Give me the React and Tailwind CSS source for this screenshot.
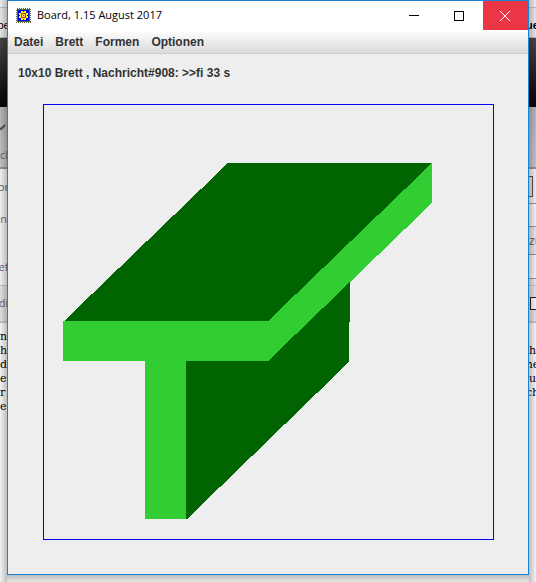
import React from "react";

const menus = ["Datei", "Brett", "Formen", "Optionen"];

const leftLines = ["n", "h", "d", "e", "r", "e"];
const rightLines = ["", "h", "ne", "u", "ch", ""];

function AppIcon() {
  return (
    <svg className="h-[15px] w-[15px] shrink-0" viewBox="0 0 15 15" shapeRendering="crispEdges" aria-hidden="true">
      <path d="M0.5 0.5H14.5V14.5H0.5Z" fill="none" stroke="#556b2f" strokeDasharray="1 1" />
      <path d="M1 1h13v13H1z" fill="#55682c" />
      <path d="M2 2h11v11H2z" fill="#0000f0" />
      <path d="M5 3h2v1h1V3h2v2h2v2h-1v1h1v2h-2v2H8v-1H7v1H5v-2H3V8h1V7H3V5h2z" fill="#ffff00" />
      <path d="M5 5h5v5H5z" fill="#f02020" />
      <path d="M6 6h3v3H6z" fill="#ffe060" />
      <path d="M7 7h1v1H7z" fill="#f02020" />
    </svg>
  );
}

function TitleBar() {
  return (
    <header className="flex h-[29px] items-stretch bg-white">
      <div className="flex flex-1 items-center gap-[6px] pl-2 text-black">
        <AppIcon />
        <h1 className="whitespace-nowrap font-['Open_Sans','Noto_Sans',sans-serif] text-[11px] font-normal">Board, 1.15 August 2017</h1>
      </div>
      <button aria-label="Minimieren" className="flex w-[45px] items-center justify-center pr-[3px]">
        <span className="h-px w-[10px] bg-black" />
      </button>
      <button aria-label="Maximieren" className="flex w-[45px] items-center justify-center pr-[3px]">
        <span className="h-[10px] w-[10px] border border-black" />
      </button>
      <button aria-label="Schließen" className="flex w-[45px] items-center justify-center bg-[#eb3645] pr-px">
        <svg className="h-[10px] w-[10px]" viewBox="0 0 10 10" aria-hidden="true">
          <path d="M0 0L10 10M10 0L0 10" stroke="#fff" strokeWidth="1" fill="none" />
        </svg>
      </button>
    </header>
  );
}

function Board() {
  return (
    <svg className="block w-full" viewBox="0 0 449 434" shapeRendering="crispEdges" role="img" aria-label="T-Träger">
      <path d="M140 256L306 177V217H305V257L143 414H140Z" fill="#006400" />
      <path d="M20 216L184 58H388L224 216Z" fill="#006400" />
      <path d="M19 216H224L388 58V98L224 256H142V414H101V256H19Z" fill="#32cd32" />
    </svg>
  );
}

function PageLines({ lines, className }) {
  return (
    <div className={`flex-1 bg-white pt-[7px] font-['DejaVu_Serif',serif] text-[11px] leading-[14px] text-black ${className}`}>
      {lines.map((line, i) => (
        <p key={i} className="h-[14px] whitespace-nowrap">{line}</p>
      ))}
    </div>
  );
}

function LeftPage() {
  return (
    <aside className="relative flex w-[7px] shrink-0 flex-col overflow-hidden font-['Open_Sans',sans-serif] text-[11px] text-[#666]">
      <div className="h-[8px] shrink-0 border-b border-[#ccc] bg-[#f8f8f8]" />
      <div className="flex h-[30px] shrink-0 items-center justify-center border-b border-[#bbb] bg-[#f0f0f0] pt-[6px] font-['Liberation_Sans',sans-serif] text-black">be</div>
      <div className="h-[69px] shrink-0 bg-linear-to-b from-[#4a4a4a] to-[#050505]" />
      <div className="flex h-[62px] shrink-0 flex-col border-b-2 border-[#999] bg-linear-to-b from-[#b9bcbf] to-[#c9cccf]">
        <svg className="mt-[15px] h-[10px] w-[7px] shrink-0" viewBox="0 0 7 10" aria-hidden="true">
          <path d="M0 6L1 7L5 3" fill="none" stroke="#555" strokeWidth="2" />
        </svg>
        <span className="mt-[15px] leading-4">cl</span>
      </div>
      <div className="flex h-[117px] shrink-0 flex-col items-center border-b border-[#ccc] bg-[#fcfcfc] text-[11px] leading-4">
        <span className="mt-[10px]">or</span>
        <span className="mt-[16px] text-[#855a75]">n</span>
        <span className="mt-[32px]">ef</span>
      </div>
      <div className="flex h-[37px] shrink-0 items-center justify-center border-b-2 border-[#ccc] bg-[#eaeaea] text-[11px]">di</div>
      <PageLines lines={leftLines} className="" />
      <div className="absolute inset-0 bg-linear-to-r from-black/5 to-black/25" />
    </aside>
  );
}

function RightPage() {
  return (
    <aside className="relative flex w-[7px] shrink-0 flex-col overflow-hidden font-['Open_Sans',sans-serif] text-[12px] text-[#666]">
      <div className="h-[8px] shrink-0 border-b border-[#ccc] bg-[#f8f8f8]" />
      <div className="flex h-[30px] shrink-0 items-center justify-center border-b border-[#bbb] bg-[#f0f0f0] pt-[6px] font-['Liberation_Sans',sans-serif] text-[11px] font-bold text-black">ue</div>
      <div className="h-[69px] shrink-0 bg-linear-to-b from-[#4a4a4a] to-[#050505]" />
      <div className="h-[62px] shrink-0 border-b-2 border-[#999] bg-linear-to-b from-[#b9bcbf] to-[#c9cccf]" />
      <div className="h-[35px] shrink-0 border-b border-[#999] bg-[#f8f8f8] pt-[7px]">
        <div className="h-[21px] w-[4px] border-y border-r border-[#555] bg-[#eee]" />
      </div>
      <div className="h-[23px] shrink-0 border-b border-[#999] bg-[#fcfcfc]" />
      <div className="flex h-[28px] shrink-0 items-center border-b border-[#999] bg-[#eee]">zu</div>
      <div className="h-[24px] shrink-0 border-b border-[#999] bg-[#fcfcfc]" />
      <div className="h-[7px] shrink-0 border-b border-[#ccc] bg-[#eee]" />
      <div className="flex h-[37px] shrink-0 items-center border-b-2 border-[#ccc] bg-[#eaeaea] pl-px">
        <div className="h-[13px] w-[13px] shrink-0 border border-[#222] bg-white" />
      </div>
      <PageLines lines={rightLines} className="flex flex-col items-center" />
      <div className="absolute inset-0 bg-linear-to-r from-black/25 to-black/5" />
    </aside>
  );
}

export default function App() {
  return (
    <div className="flex min-h-screen items-stretch overflow-hidden bg-white">
      <LeftPage />
      <div className="flex min-w-0 flex-1 flex-col">
        <main className="flex flex-1 flex-col border border-[#1883d7] bg-[#eeeeee] font-['Liberation_Sans',Arial,sans-serif] text-[12px] font-bold text-[#333]">
          <TitleBar />
          <nav className="flex h-[24px] items-center gap-3 border-b border-[#ccc] bg-linear-to-b from-white to-[#dadada] px-[6px]">
            {menus.map((name) => (
              <button key={name} className="font-bold">{name}</button>
            ))}
          </nav>
          <p className="px-[10px] pt-[11px] leading-4">10x10 Brett , Nachricht#908: &gt;&gt;fi 33 s</p>
          <section className="mt-[23px] mr-[34px] mb-[34px] ml-[35px] border border-[#0000f0]">
            <Board />
          </section>
        </main>
        <div className="h-[7px] shrink-0 bg-linear-to-b from-[#bdbdbd] to-[#e6e6e6]" />
      </div>
      <RightPage />
    </div>
  );
}
